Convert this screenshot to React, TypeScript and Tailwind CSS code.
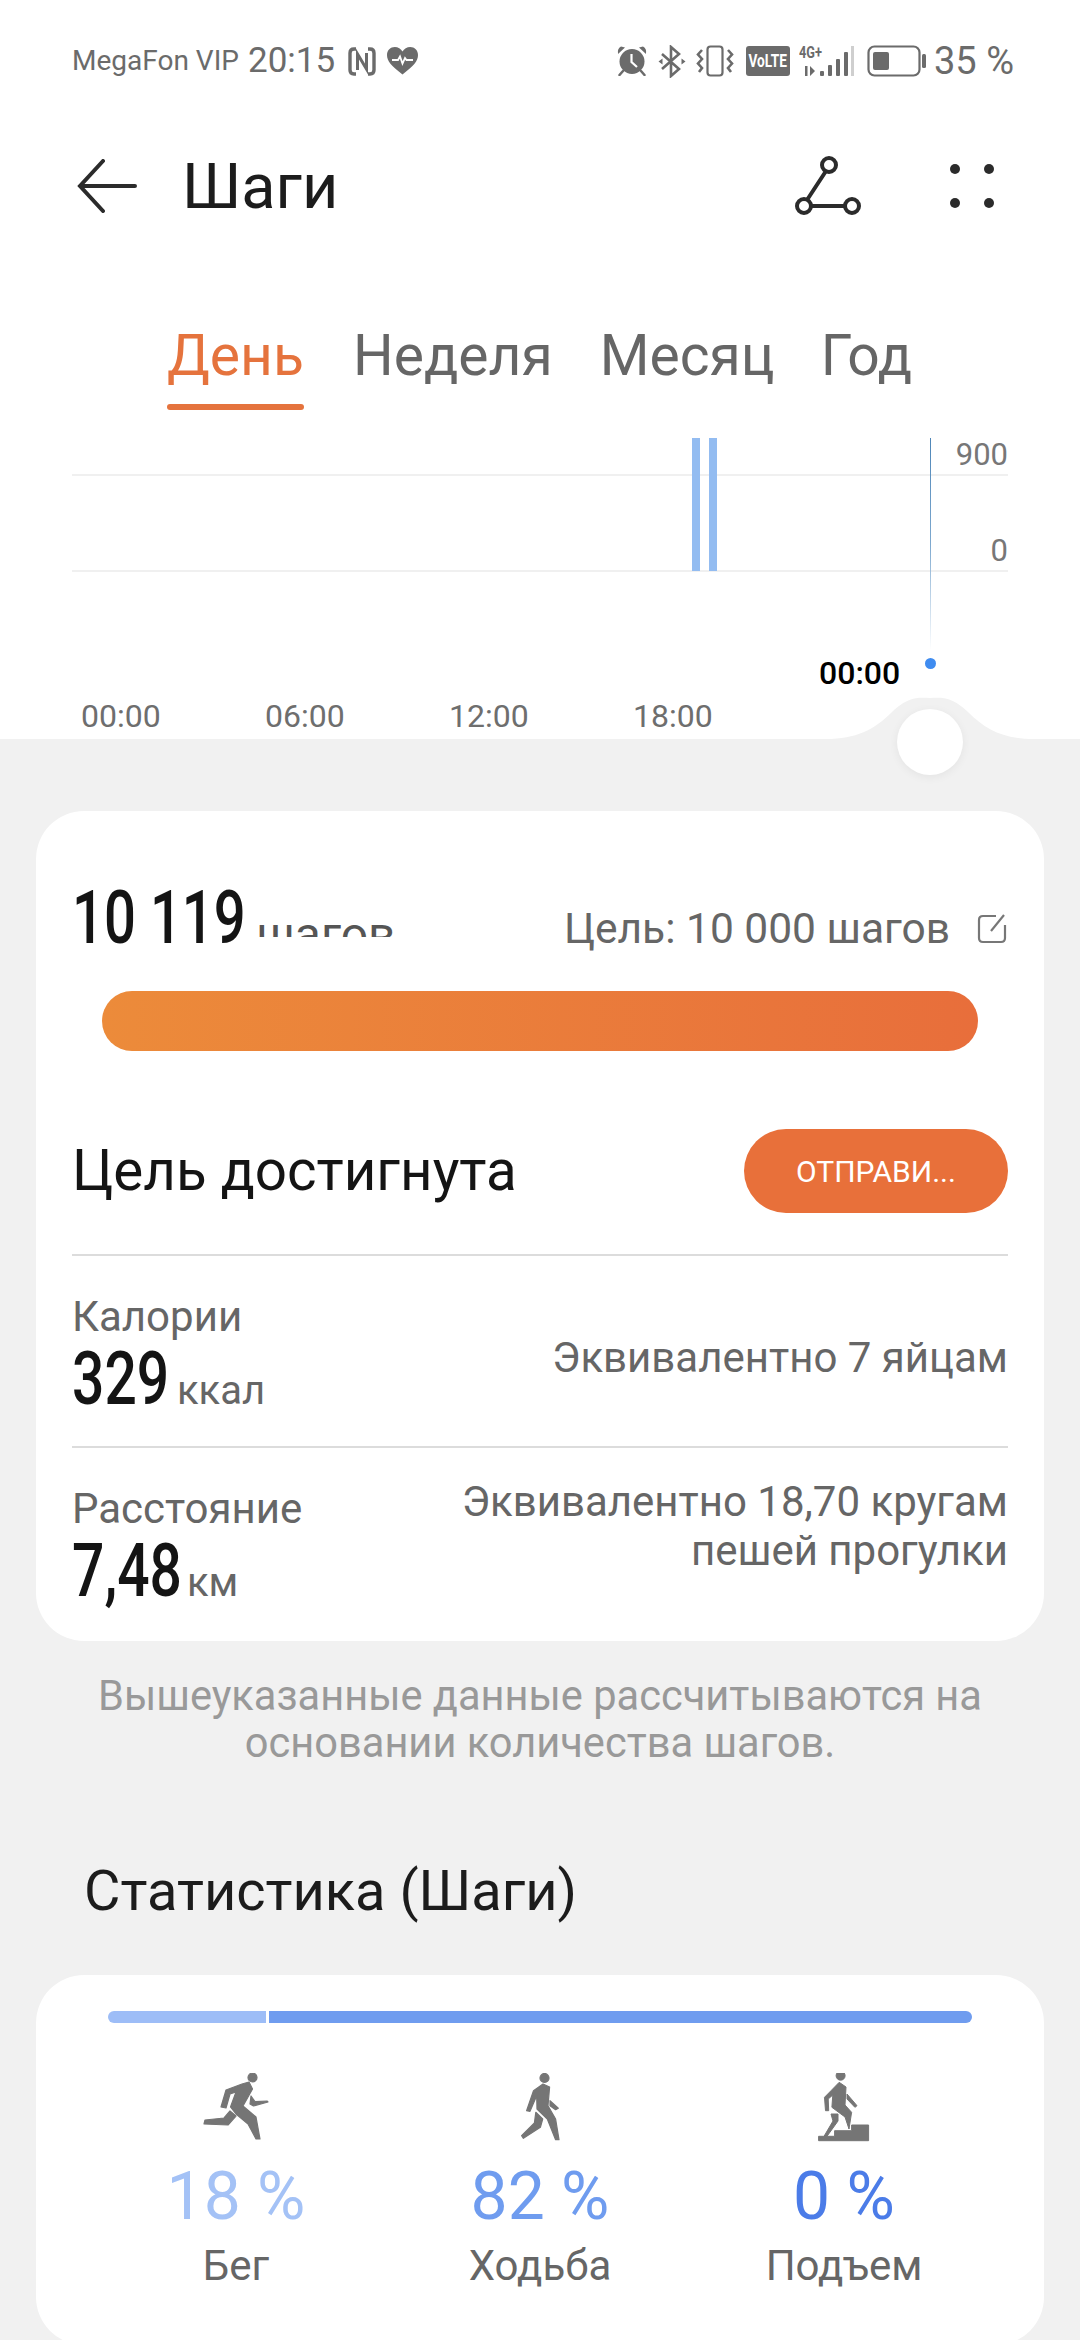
const Alarm = () => (
  <svg width="30" height="30" viewBox="0 0 30 30" fill="#6b6b6b">
    <circle cx="15" cy="15.5" r="12.5" />
    <path d="M1 8 L8 1.5 L4 .5 Q0 2.5 1 8Z M29 8 L22 1.5 L26 .5 Q30 2.5 29 8Z" />
    <path d="M6 25 L2.5 29 M24 25 L27.5 29" stroke="#6b6b6b" strokeWidth="2.5" strokeLinecap="round" />
    <path d="M14.5 8 V16 L20 21" stroke="#fff" strokeWidth="2.2" fill="none" />
  </svg>
);

const Bluetooth = () => (
  <svg width="28" height="33" viewBox="0 0 28 33" fill="none" stroke="#6b6b6b" strokeWidth="2.6">
    <path d="M4 9 L21 24 L13 31 V2 L21 9 L4 24" />
    <path d="M0.5 16.5 L4.5 13.5 V19.5Z M27.5 16.5 L23.5 13.5 V19.5Z" fill="#6b6b6b" stroke="none" />
  </svg>
);

const Vibrate = () => (
  <svg width="38" height="32" viewBox="0 0 38 32" fill="none" stroke="#6b6b6b" strokeWidth="2.2">
    <rect x="11.5" y="1.5" width="15" height="29" rx="3" />
    <path d="M6 5 L2 9.5 L6 14 L2 18.500 L6 23 L3 27" strokeWidth="2.6" />
    <path d="M32 5 L36 9.5 L32 14 L36 18.500 L32 23 L35 27" strokeWidth="2.6" />
  </svg>
);

const Signal = () => (
  <div className="relative h-[32px] w-[56px]">
    <span className="absolute left-0 top-[-1px] origin-left scale-x-[0.75] text-[17px] font-bold leading-[16px] text-[#6b6b6b]">
      4G+
    </span>
    <svg className="absolute left-0 top-0" width="56" height="32" viewBox="0 0 56 32" fill="#6b6b6b">
      <path d="M6 21 h2.500 v10 h-2.500z M11 21 l5 5 -5 5z" />
      <rect x="21" y="26" width="4" height="5" rx="1" />
      <rect x="29" y="20" width="4" height="11" rx="1" />
      <rect x="37" y="14" width="4" height="17" rx="1" />
      <rect x="45" y="7" width="4" height="24" rx="1" />
      <rect x="52" y="1" width="3" height="30" fill="#cfcfcf" />
    </svg>
  </div>
);

const Battery = () => (
  <svg width="59" height="32" viewBox="0 0 59 32" fill="none">
    <rect x="1.5" y="1.5" width="51" height="29" rx="6" stroke="#6b6b6b" strokeWidth="2.2" />
    <rect x="6" y="7" width="16" height="18" rx="2" fill="#6b6b6b" />
    <rect x="55" y="9" width="4" height="14" rx="1.500" fill="#6b6b6b" />
  </svg>
);

const Nfc = () => (
  <svg width="28" height="29" viewBox="0 0 28 29" fill="none" stroke="#6b6b6b">
    <path d="M8 2 H6 Q2 2 2 6 V23 Q2 27 6 27 H8 M20 2 H22 Q26 2 26 6 V23 Q26 27 22 27 H20" strokeWidth="3.4" />
    <path d="M9.500 23 V7 L18.500 22 V6" strokeWidth="3" />
  </svg>
);

const Heart = () => (
  <svg width="31" height="28" viewBox="0 0 31 28">
    <path
      d="M15.500 27.500 C4 18.500 0 14 0 8 C0 3 3.500 0 7.800 0 C11 0 14 1.800 15.500 4.500 C17 1.800 20 0 23.200 0 C27.500 0 31 3 31 8 C31 14 27 18.500 15.500 27.500Z"
      fill="#6b6b6b"
    />
    <path d="M5 13 H11 L13 9.500 L15.500 16.500 L18 11 L19.500 13 H26" fill="none" stroke="#fff" strokeWidth="1.800" />
  </svg>
);

const StatusBar = () => (
  <div className="flex h-[122px] items-center justify-between pl-[72px] pr-[66px] text-[#6b6b6b]">
    <div className="flex items-center">
      <span className="w-[176px] whitespace-nowrap text-[28px]">MegaFon VIP</span>
      <span className="w-[100px] whitespace-nowrap text-[35px]">20:15</span>
      <Nfc />
      <span className="w-[11px]" />
      <Heart />
    </div>
    <div className="flex items-center">
      <Alarm />
      <span className="w-[11px]" />
      <Bluetooth />
      <span className="w-[10px]" />
      <Vibrate />
      <span className="w-[12px]" />
      <span className="flex h-[30px] w-[44px] items-center justify-center rounded-[3px] bg-[#6b6b6b] text-white">
        <span className="scale-x-[0.72] text-[19px] font-bold">VoLTE</span>
      </span>
      <span className="w-[9px]" />
      <Signal />
      <span className="w-[12px]" />
      <Battery />
      <span className="w-[8px]" />
      <span className="whitespace-nowrap text-[38px]">35 %</span>
    </div>
  </div>
);

const Header = () => (
  <div className="relative flex h-[128px] items-center pl-[77px] pr-[86px]">
    <svg width="60" height="54" viewBox="0 0 60 54" fill="none" stroke="#2b2b2b" strokeWidth="4" strokeLinecap="round">
      <path d="M26 2 L3 27 L26 52 M3 27 H58" />
    </svg>
    <span className="ml-[45px] text-[63px] leading-none text-[#1c1c1c]">Шаги</span>
    <div className="ml-auto flex items-center">
      <svg width="66" height="60" viewBox="0 0 66 60" fill="none" stroke="#2b2b2b" strokeWidth="4">
        <circle cx="34" cy="9" r="7" />
        <circle cx="9" cy="50" r="7" />
        <circle cx="57" cy="50" r="7" />
        <path d="M31 15 L12 44 M16 50 H50" />
      </svg>
      <svg className="ml-[89px]" width="44" height="44" viewBox="0 0 44 44" fill="#2b2b2b">
        <circle cx="5" cy="5" r="5" />
        <circle cx="39" cy="5" r="5" />
        <circle cx="5" cy="39" r="5" />
        <circle cx="39" cy="39" r="5" />
      </svg>
    </div>
  </div>
);

const Tabs = () => (
  <div className="flex h-[160px] pl-[167px] text-[57px] leading-none text-[#666666]">
    <div className="flex h-[160px] w-[137px] flex-col justify-between whitespace-nowrap pt-[77px] text-[#e5733d]">
      <span>День</span>
      <div className="h-[6px] rounded-full bg-[#e5733d]" />
    </div>
    <span className="ml-[49px] pt-[77px]">Неделя</span>
    <span className="ml-[47px] pt-[77px]">Месяц</span>
    <span className="ml-[46px] pt-[77px]">Год</span>
  </div>
);

const axisLabels = [
  { label: "00:00", cls: "left-[81px]" },
  { label: "06:00", cls: "left-[265px]" },
  { label: "12:00", cls: "left-[449px]" },
  { label: "18:00", cls: "left-[633px]" },
];

const Chart = () => (
  <div className="relative h-[329px]">
    <div className="absolute left-[72px] top-[64px] h-[2px] w-[936px] bg-[#f0f0f0]" />
    <div className="absolute left-[72px] top-[160px] h-[2px] w-[936px] bg-[#f0f0f0]" />
    <div className="absolute left-[692px] top-[28px] h-[133px] w-[8px] bg-[#93bcf1]" />
    <div className="absolute left-[709px] top-[28px] h-[133px] w-[8px] bg-[#93bcf1]" />
    <div className="absolute left-[930px] top-[28px] h-[212px] w-[1px] bg-gradient-to-b from-[#4e86b8] via-[#7ea9cf] to-white" />
    <div className="absolute left-[925px] top-[248px] h-[11px] w-[11px] rounded-full bg-[#3f8cf0]" />
    <span className="absolute right-[72px] top-[29px] text-[31px] leading-[32px] text-[#777777]">900</span>
    <span className="absolute right-[72px] top-[125px] text-[31px] leading-[32px] text-[#777777]">0</span>
    <span className="absolute left-[819px] top-[247px] text-[32px] font-medium leading-[32px] text-black">00:00</span>
    {axisLabels.map((a) => (
      <span key={a.label} className={`absolute top-[290px] text-[32px] leading-[32px] text-[#6e6e6e] ${a.cls}`}>
        {a.label}
      </span>
    ))}
    <svg className="absolute left-[826px] top-[280px]" width="208" height="49" viewBox="0 0 208 49">
      <path d="M0 49 C30 49 48 40 66 22 C84 5 94 8 104 8 C114 8 124 5 142 22 C160 40 178 49 208 49 Z" fill="#f1f1f1" />
    </svg>
    <div className="absolute left-[897px] top-[299px] z-10 h-[66px] w-[66px] rounded-full bg-white shadow-[0_2px_10px_rgba(0,0,0,0.06)]" />
  </div>
);

const Metric = ({
  label,
  value,
  unit,
  note,
  noteCls,
  valueCls,
}: {
  label: string;
  value: string;
  unit: string;
  note: string[];
  noteCls: string;
  valueCls: string;
}) => (
  <div className="flex h-[192px] items-center justify-between border-t-2 border-[#dcdcdc]">
    <div className="flex flex-col pt-[12px]">
      <span className="text-[42px] leading-[46px] text-[#666666]">{label}</span>
      <div className="flex items-baseline">
        <div className={valueCls}>
          <span className="block origin-left scale-x-[0.77] whitespace-nowrap text-[74px] font-medium leading-[78px] text-[#141414]">
            {value}
          </span>
        </div>
        <span className="ml-[8px] text-[40px] text-[#666666]">{unit}</span>
      </div>
    </div>
    <div className={`text-right text-[42px] leading-[49px] text-[#666666] ${noteCls}`}>
      {note.map((n) => (
        <div key={n}>{n}</div>
      ))}
    </div>
  </div>
);

const Summary = () => (
  <div className="mx-[36px] h-[830px] rounded-[48px] bg-white px-[36px] pt-[68px]">
    <div className="flex h-[72px] items-end justify-between">
      <div className="flex items-end">
        <div className="-mb-[3px] w-[171px]">
          <span className="block origin-left scale-x-[0.76] whitespace-nowrap text-[74px] font-medium leading-[72px] text-[#141414]">
            10 119
          </span>
        </div>
        <div className="mb-[14px] ml-[13px] h-[20px] overflow-hidden">
          <span className="block text-[48px] leading-[36px] text-[#555555]">шагов</span>
        </div>
      </div>
      <div className="-mb-[2px] flex items-center text-[42.5px] leading-[48px] text-[#666666]">
        Цель: 10 000 шагов
        <svg className="ml-[26px]" width="32" height="32" viewBox="0 0 32 32" fill="none" stroke="#777777" strokeWidth="2.2">
          <path d="M20 3 H7 Q3 3 3 7 V25 Q3 29 7 29 H25 Q29 29 29 25 V12" />
          <path d="M15 18 L28 2" />
        </svg>
      </div>
    </div>
    <div className="mx-[30px] mt-[40px] h-[60px] rounded-full bg-gradient-to-r from-[#ec8b3a] to-[#e86e3b]" />
    <div className="mt-[78px] flex h-[84px] items-center justify-between">
      <span className="text-[56.5px] leading-none text-[#141414]">Цель достигнута</span>
      <span className="flex h-[84px] w-[264px] items-center justify-center rounded-full bg-[#e8703a] text-[30px] text-white">
        ОТПРАВИ...
      </span>
    </div>
    <div className="mt-[41px]">
      <Metric
        label="Калории"
        value="329"
        unit="ккал"
        note={["Эквивалентно 7 яйцам"]}
        noteCls="mt-[12px]"
        valueCls="w-[97px]"
      />
      <Metric
        label="Расстояние"
        value="7,48"
        unit="км"
        note={["Эквивалентно 18,70 кругам", "пешей прогулки"]}
        noteCls="mb-[34px]"
        valueCls="w-[107px]"
      />
    </div>
  </div>
);

const RunIcon = () => (
  <svg width="72" height="70" viewBox="20 24 72 70" fill="#757575" stroke="#757575" strokeWidth="1.2" strokeLinejoin="round">
    <ellipse cx="72.500" cy="28.500" rx="4.500" ry="4.500" />
    <path d="M69 33 L62 35 L46 41 L41 58 L46 59 L50 45 L56 43 L50.500 58 L56 65 L68 75 L76 90 L80 90 L76 68 L63 57 L72.500 40Z" />
    <path d="M71 47 L70 55 L73.500 57 L88 53 L87 52 L75 52.700Z" />
    <path d="M50 62 L44 69 L25 71 L24 75 L48 76 L56 67Z" />
  </svg>
);

const WalkIcon = () => (
  <svg width="48" height="70" viewBox="336 24 48 70" fill="#757575" stroke="#757575" strokeWidth="1.2" strokeLinejoin="round">
    <ellipse cx="364.500" cy="29" rx="4.500" ry="4.500" />
    <path d="M363 35 L353.500 41.700 L346.600 61.700 L350 62.300 L356.700 46.700 L357 60 L367.300 70 L375.600 90.700 L379 90.700 L375.600 70 L368 56.700 L369.600 38Z" />
    <path d="M370 51.700 L370 56.700 L375.600 60.700 L378.300 59.300Z" />
    <path d="M355.800 63.300 L354.400 74 L341.600 86.700 L343.400 89.300 L360.400 78.300 L362.700 70Z" />
  </svg>
);

const ClimbIcon = () => (
  <svg width="56" height="70" viewBox="637 24 56 70" fill="#757575" stroke="#757575" strokeWidth="1" strokeLinejoin="round">
    <ellipse cx="661.600" cy="26.700" rx="4.500" ry="4.500" />
    <path d="M660.200 33.300 L652 41.700 L645.500 48.300 L646.500 61.700 L649.700 61.700 L649.200 50 L653.800 46 L652.900 58.300 L666 68 L670 80 L672.600 63.300 L666 56 L667 38Z" />
    <path d="M668 45 L668 50 L675.900 58.300 L678 56.700Z" />
    <path d="M652 65 L654 72 L645 87.300 L648 87.300 L659 72 L659 65Z" />
    <path d="M639.600 87.300 H655.600 V81.700 H672.600 V76 H689.600 V91.700 H639.600Z" />
  </svg>
);

const stats = [
  { icon: <RunIcon />, value: "18 %", label: "Бег", color: "text-[#a4c2f6]" },
  { icon: <WalkIcon />, value: "82 %", label: "Ходьба", color: "text-[#6f9cef]" },
  { icon: <ClimbIcon />, value: "0 %", label: "Подъем", color: "text-[#4b7ce8]" },
];

const Stats = () => (
  <div className="mx-[36px] h-[370px] rounded-[48px] bg-white px-[72px] pt-[36px]">
    <div className="flex h-[12px] gap-[3px]">
      <div className="w-[158px] rounded-l-full bg-[#9dbdf7]" />
      <div className="flex-1 rounded-r-full bg-[#6f9cef]" />
    </div>
    <div className="-mx-[24px] mt-[50px] grid grid-cols-3">
      {stats.map((s) => (
        <div key={s.label} className="flex flex-col items-center">
          <div className="flex h-[70px] items-center">{s.icon}</div>
          <span className={`mt-[21px] text-[66px] leading-[66px] ${s.color}`}>{s.value}</span>
          <span className="mt-[12px] text-[42px] leading-[48px] text-[#666666]">{s.label}</span>
        </div>
      ))}
    </div>
  </div>
);

export default function App() {
  return (
    <div className="h-[2340px] w-[1080px] overflow-hidden bg-[#f1f1f1] font-['Roboto','Noto_Sans',sans-serif]">
      <div className="h-[739px] bg-white">
        <StatusBar />
        <Header />
        <Tabs />
        <Chart />
      </div>
      <div className="pt-[72px]">
        <Summary />
        <div className="mt-[31px] text-center text-[41.6px] leading-[47px] text-[#999999]">
          <div>Вышеуказанные данные рассчитываются на</div>
          <div>основании количества шагов.</div>
        </div>
        <div className="mt-[93px] pl-[84px] text-[56px] leading-[64px] text-[#1c1c1c]">Статистика (Шаги)</div>
        <div className="mt-[52px]">
          <Stats />
        </div>
      </div>
    </div>
  );
}
